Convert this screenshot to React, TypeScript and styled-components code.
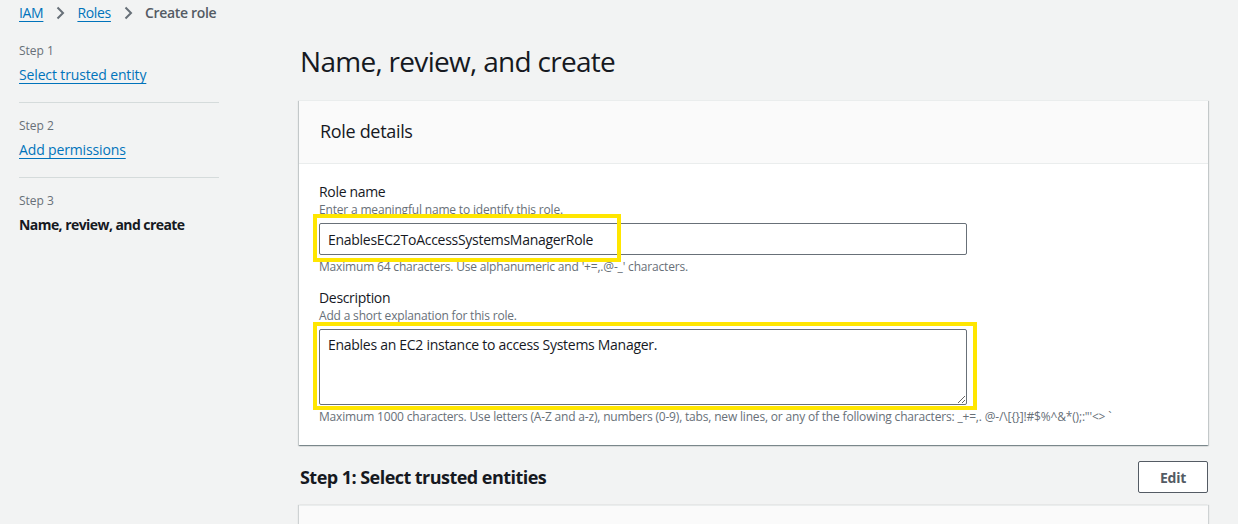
import React from "react";
import styled, { createGlobalStyle } from "styled-components";

const Global = createGlobalStyle`
  html, body { margin: 0; padding: 0; background: #f2f3f3; }
  body { font-family: "Open Sans", "Noto Sans", Arial, sans-serif; color: #16191f; letter-spacing: -0.02em; }
  input, textarea, button { letter-spacing: -0.02em; }
  * { box-sizing: border-box; }
`;

const Page = styled.div`
  padding: 3px 30px 0 19px;
  height: 524px;
  overflow: hidden;
`;

const Crumbs = styled.nav`
  display: flex;
  align-items: center;
  gap: 11px;
  height: 20px;
  font-size: 14px;
  line-height: 20px;
`;

const Link = styled.a`
  color: #0073bb;
  text-decoration: underline;
  text-underline-offset: 3px;
  text-decoration-thickness: 1px;
  cursor: pointer;
`;

const Current = styled.span`
  color: #545b64;
  font-weight: 600;
`;

const Chevron = () => (
  <svg width="12" height="14" viewBox="0 0 12 14" aria-hidden>
    <path d="M3.5 1.5 L9 7 L3.5 12.5" fill="none" stroke="#687078" strokeWidth="2" />
  </svg>
);

const Body = styled.div`
  display: grid;
  grid-template-columns: 200px 1fr;
  column-gap: 80px;
`;

const Side = styled.aside`
  padding-top: 20px;
  display: flex;
  flex-direction: column;
`;

const StepItem = styled.div<{ $last?: boolean }>`
  padding: 0 0 ${(p) => (p.$last ? 0 : 17)}px;
  margin-bottom: ${(p) => (p.$last ? 0 : 15)}px;
  border-bottom: ${(p) => (p.$last ? "none" : "1px solid #d5dbdb")};
  display: flex;
  flex-direction: column;
  gap: 6px;
`;

const StepNum = styled.div`
  font-size: 12px;
  line-height: 16px;
  color: #687078;
  letter-spacing: 0;
`;

const StepName = styled.div<{ $active?: boolean }>`
  font-size: 14px;
  line-height: 20px;
  font-weight: ${(p) => (p.$active ? 700 : 400)};
  letter-spacing: ${(p) => (p.$active ? "-0.04em" : "-0.01em")};
  color: #16191f;
`;

const Main = styled.main`
  display: flex;
  flex-direction: column;
`;

const Title = styled.h1`
  margin: 20px 0 0 1px;
  font-size: 28px;
  line-height: 36px;
  font-weight: 400;
  letter-spacing: -0.025em;
  color: #16191f;
`;

const Card = styled.section`
  margin-top: 21px;
  background: #fff;
  box-shadow: 0 1px 1px 0 rgba(0, 28, 36, 0.3), 1px 1px 1px 0 rgba(0, 28, 36, 0.15),
    -1px 1px 1px 0 rgba(0, 28, 36, 0.15);
  border-top: 1px solid #eaeded;
`;

const CardHeader = styled.header`
  height: 63px;
  display: flex;
  align-items: center;
  padding: 0 20px 2px 21px;
  background: #fafafa;
  border-bottom: 1px solid #eaeded;
  font-size: 18px;
  line-height: 22px;
  color: #16191f;
`;

const CardBody = styled.div`
  padding: 18px 20px 20px;
  display: flex;
  flex-direction: column;
  gap: 13px;
`;

const Field = styled.div`
  display: flex;
  flex-direction: column;
`;

const Label = styled.label`
  font-size: 14px;
  line-height: 20px;
  color: #16191f;
`;

const Hint = styled.div`
  font-size: 12px;
  line-height: 16px;
  color: #687078;
  letter-spacing: -0.015em;
`;

const Control = styled.div`
  position: relative;
  width: 648px;
  margin: 5px 0 4px;
`;

const TextInput = styled.input`
  display: block;
  width: 100%;
  height: 32px;
  padding: 0 8px;
  border: 1px solid #687078;
  border-radius: 2px;
  font-family: inherit;
  font-size: 14px;
  color: #16191f;
  background: #fff;
  outline: none;
`;

const TextArea = styled.textarea`
  display: block;
  width: 100%;
  height: 76px;
  padding: 4px 8px;
  border: 1px solid #687078;
  border-radius: 2px;
  font-family: inherit;
  font-size: 14px;
  line-height: 22px;
  color: #16191f;
  background: #fff;
  outline: none;
  resize: vertical;
`;

const Highlight = styled.div<{ $l: number; $t: number; $w: number; $h: number }>`
  position: absolute;
  left: ${(p) => p.$l}px;
  top: ${(p) => p.$t}px;
  width: ${(p) => p.$w}px;
  height: ${(p) => p.$h}px;
  border: 4px solid #ffe600;
  pointer-events: none;
`;

const SectionHead = styled.div`
  margin-top: 16px;
  display: flex;
  align-items: center;
  justify-content: space-between;
`;

const H2 = styled.h2`
  margin: 0 0 0 1px;
  font-size: 18px;
  line-height: 22px;
  font-weight: 700;
  letter-spacing: -0.03em;
  color: #16191f;
`;

const Button = styled.button`
  width: 70px;
  height: 32px;
  border: 1px solid #545b64;
  border-radius: 2px;
  background: #fff;
  color: #545b64;
  font-family: inherit;
  font-size: 14px;
  font-weight: 700;
`;

const NextCard = styled.section`
  margin-top: 12px;
  height: 60px;
  background: #fafafa;
  border-top: 1px solid #eaeded;
  box-shadow: 1px 0 1px 0 rgba(0, 28, 36, 0.15), -1px 0 1px 0 rgba(0, 28, 36, 0.15);
`;

export default function App() {
  return (
    <>
      <Global />
      <Page>
        <Crumbs>
          <Link>IAM</Link>
          <Chevron />
          <Link>Roles</Link>
          <Chevron />
          <Current>Create role</Current>
        </Crumbs>
        <Body>
          <Side>
            <StepItem>
              <StepNum>Step 1</StepNum>
              <StepName>
                <Link>Select trusted entity</Link>
              </StepName>
            </StepItem>
            <StepItem>
              <StepNum>Step 2</StepNum>
              <StepName>
                <Link>Add permissions</Link>
              </StepName>
            </StepItem>
            <StepItem $last>
              <StepNum>Step 3</StepNum>
              <StepName $active>Name, review, and create</StepName>
            </StepItem>
          </Side>
          <Main>
            <Title>Name, review, and create</Title>
            <Card>
              <CardHeader>Role details</CardHeader>
              <CardBody>
                <Field>
                  <Label>Role name</Label>
                  <Hint>Enter a meaningful name to identify this role.</Hint>
                  <Control>
                    <TextInput defaultValue="EnablesEC2ToAccessSystemsManagerRole" readOnly />
                    <Highlight $l={-6} $t={-9} $w={308} $h={48} />
                  </Control>
                  <Hint>Maximum 64 characters. Use alphanumeric and '+=,.@-_' characters.</Hint>
                </Field>
                <Field>
                  <Label>Description</Label>
                  <Hint>Add a short explanation for this role.</Hint>
                  <Control>
                    <TextArea defaultValue="Enables an EC2 instance to access Systems Manager." readOnly />
                    <Highlight $l={-6} $t={-7} $w={664} $h={88} />
                  </Control>
                  <Hint>
                    Maximum 1000 characters. Use letters (A-Z and a-z), numbers (0-9), tabs, new lines, or any of the
                    following characters: _+=,. @-/\[{"{}"}]!#$%^&amp;*();:"'&lt;&gt; `
                  </Hint>
                </Field>
              </CardBody>
            </Card>
            <SectionHead>
              <H2>Step 1: Select trusted entities</H2>
              <Button>Edit</Button>
            </SectionHead>
            <NextCard />
          </Main>
        </Body>
      </Page>
    </>
  );
}
